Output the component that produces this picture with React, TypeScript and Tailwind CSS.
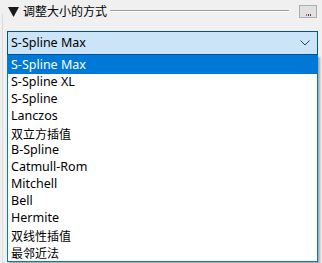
import React from "react";

const items = [
  "S-Spline Max",
  "S-Spline XL",
  "S-Spline",
  "Lanczos",
  "双立方插值",
  "B-Spline",
  "Catmull-Rom",
  "Mitchell",
  "Bell",
  "Hermite",
  "双线性插值",
  "最邻近法",
];

export default function App() {
  return (
    <div
      className="relative w-[322px] h-[263px] overflow-hidden bg-[#f0f0f0] text-[12.5px] text-black"
      style={{ fontFamily: '"Noto Sans", "Noto Sans CJK SC", sans-serif' }}
    >
      <div className="absolute left-[2px] top-[14px] bottom-0 w-px bg-[#dcdcdc]" />
      <div className="flex items-center h-[20px] mt-[1px] pl-[8px] pr-[5px]">
        <svg width="11" height="10" viewBox="0 0 11 10" className="mr-[4px] mt-[1px] shrink-0">
          <path d="M0 0 H11 L5.5 10 Z" fill="#1a1a1a" />
        </svg>
        <span className="leading-none text-[12px]" style={{ fontFamily: '"Noto Sans CJK SC", sans-serif' }}>调整大小的方式</span>
        <div className="flex-1 ml-[3px] mr-[10px] flex flex-col">
          <div className="h-px bg-[#a0a0a0]" />
          <div className="h-px bg-white" />
        </div>
        <div className="w-[18px] h-[13px] border border-[#adadad] bg-[#e1e1e1] flex items-end justify-center pb-[1px]">
          <div className="flex gap-px">
            <div className="w-px h-[2px] bg-[#c07020]" />
            <div className="w-px h-[2px] bg-[#2040a0]" />
            <div className="w-px h-[2px] bg-[#a02040]" />
          </div>
        </div>
      </div>
      <div className="ml-[7px] mr-[4px] mt-[10px] h-[24px] border border-[#005499] bg-[#cce4f7] flex items-center pl-[3px] pr-[6px]">
        <span className="flex-1">S-Spline Max</span>
        <svg width="10" height="6" viewBox="0 0 10 6" className="mr-[1px]">
          <path d="M0.5 0.5 L5 5 L9.5 0.5" fill="none" stroke="#404040" strokeWidth="1" />
        </svg>
      </div>
      <div className="flex">
        <div className="ml-[7px] w-[311px] h-[207px] border border-[#0078d7] bg-white flex flex-col shadow-[2px_2px_2px_rgba(0,0,0,0.3)]">
          {items.map((t, i) => (
            <div
              key={t}
              className={
                "flex items-center pl-[3px] shrink-0 " +
                (i === 0 ? "h-[18px] bg-[#0078d7] text-white" : "h-[17px]")
              }
              style={/[\u4e00-\u9fff]/.test(t) ? { fontFamily: '"Noto Sans CJK SC", sans-serif', fontSize: "12px" } : undefined}
            >
              {t}
            </div>
          ))}
        </div>
      </div>
    </div>
  );
}
